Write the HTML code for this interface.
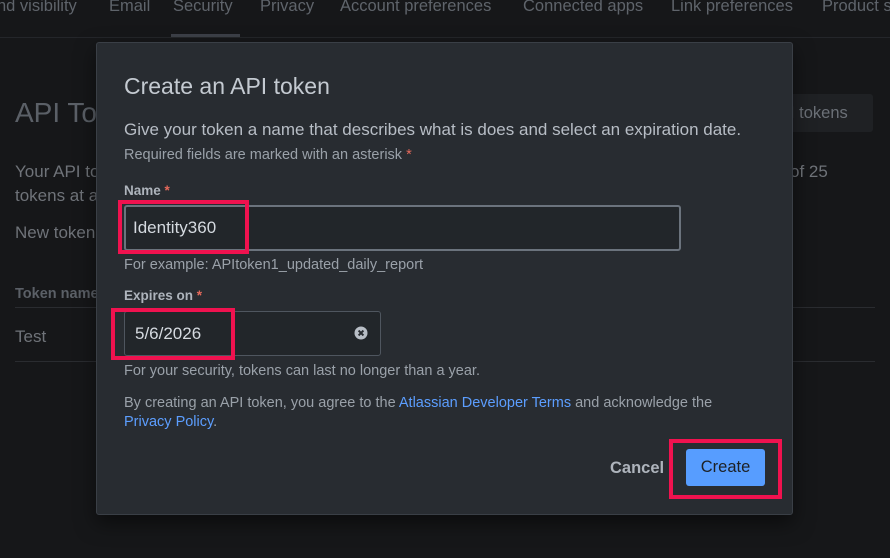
<!DOCTYPE html>
<html><head><style>
*{margin:0;padding:0;box-sizing:border-box}
body{width:890px;height:558px;background:#161719;font-family:"Liberation Sans",sans-serif;position:relative;overflow:hidden;color:#6f7379}
.a{position:absolute;white-space:nowrap}
.tab{font-size:16.5px;top:-3px;color:#5f646b}
.modal{position:absolute;left:96px;top:42px;width:697px;height:473px;background:#282c31;border:1px solid #3a3f46;border-radius:3px;box-shadow:0 8px 20px rgba(0,0,0,.5)}
.m{position:absolute;white-space:nowrap}
.lbl{font-size:13.5px;font-weight:bold;color:#aeb4bc}
.req{color:#e5695b}
.help{font-size:14.5px;color:#9aa1a9}
.inp{position:absolute;border:2px solid #6b737d;border-radius:3px;background:#22262a}
.hl{position:absolute;border:4px solid #f0124f}
</style></head><body>
<div class="a tab" style="left:-3px">nd visibility</div>
<div class="a tab" style="left:109px">Email</div>
<div class="a tab" style="left:173px">Security</div>
<div class="a tab" style="left:260px">Privacy</div>
<div class="a tab" style="left:340px">Account preferences</div>
<div class="a tab" style="left:523px">Connected apps</div>
<div class="a tab" style="left:671px">Link preferences</div>
<div class="a tab" style="left:822px">Product s</div>
<div class="a" style="left:0;top:37px;width:890px;height:1px;background:#24262a"></div>
<div class="a" style="left:171px;top:34px;width:69px;height:3px;background:#3d4148"></div>
<div class="a" style="left:15px;top:97px;font-size:28px;color:#5b6067">API Tok</div>
<div class="a" style="left:786px;top:94px;width:87px;height:38px;background:#1f2124;border-radius:3px"></div>
<div class="a" style="left:790px;top:104px;font-size:16.5px;color:#6b7077">I tokens</div>
<div class="a" style="left:15px;top:162px;font-size:17px">Your API to</div>
<div class="a" style="left:15px;top:186px;font-size:17px">tokens at a</div>
<div class="a" style="left:790px;top:162px;font-size:17px">of 25</div>
<div class="a" style="left:15px;top:223px;font-size:17px">New token</div>
<div class="a" style="left:15px;top:286px;font-size:14.5px;font-weight:bold;color:#5b6067">Token name</div>
<div class="a" style="left:15px;top:307px;width:860px;height:1px;background:#2a2c30"></div>
<div class="a" style="left:15px;top:327px;font-size:17px">Test</div>
<div class="a" style="left:15px;top:361px;width:860px;height:1px;background:#2a2c30"></div>

<div class="modal">
<div class="m" style="left:27px;top:30px;font-size:23px;color:#c4cad1">Create an API token</div>
<div class="m" style="left:27px;top:77px;font-size:17px;color:#b7bdc5">Give your token a name that describes what is does and select an expiration date.</div>
<div class="m help" style="left:27px;top:104px">Required fields are marked with an asterisk <span class="req">*</span></div>
<div class="m lbl" style="left:27px;top:140px">Name <span class="req">*</span></div>
<div class="inp" style="left:27px;top:162px;width:557px;height:46px"></div>
<div class="m" style="left:36px;top:175px;font-size:17px;color:#d5dae0">Identity360</div>
<div class="hl" style="left:21px;top:157px;width:131px;height:54px"></div>
<div class="m help" style="left:27px;top:214px">For example: APItoken1_updated_daily_report</div>
<div class="m lbl" style="left:27px;top:245px">Expires on <span class="req">*</span></div>
<div class="inp" style="left:27px;top:268px;width:257px;height:45px;border-width:1px;border-color:#4f565f"></div>
<div class="m" style="left:38px;top:281px;font-size:17px;color:#d5dae0">5/6/2026</div>
<svg class="m" style="left:257px;top:283px" width="14" height="14" viewBox="0 0 14 14"><circle cx="7" cy="7" r="6.5" fill="#b8bec6"/><path d="M4.6 4.6L9.4 9.4M9.4 4.6L4.6 9.4" stroke="#282c31" stroke-width="2"/></svg>
<div class="hl" style="left:14px;top:265px;width:124px;height:52px"></div>
<div class="m help" style="left:27px;top:320px">For your security, tokens can last no longer than a year.</div>
<div class="m help" style="left:27px;top:352px">By creating an API token, you agree to the <span style="color:#5c9eff">Atlassian Developer Terms</span> and acknowledge the</div>
<div class="m help" style="left:27px;top:371px;color:#5c9eff">Privacy Policy<span style="color:#9aa1a9">.</span></div>
<div class="m" style="left:513px;top:416px;font-size:16.5px;font-weight:bold;color:#aeb4bc">Cancel</div>
<div class="hl" style="left:572px;top:396px;width:113px;height:60px"></div>
<div class="m" style="left:589px;top:406px;width:79px;height:37px;background:#579dff;border-radius:3px;color:#1d2125;font-size:16.5px;text-align:center;line-height:37px">Create</div>
</div>
</body></html>
